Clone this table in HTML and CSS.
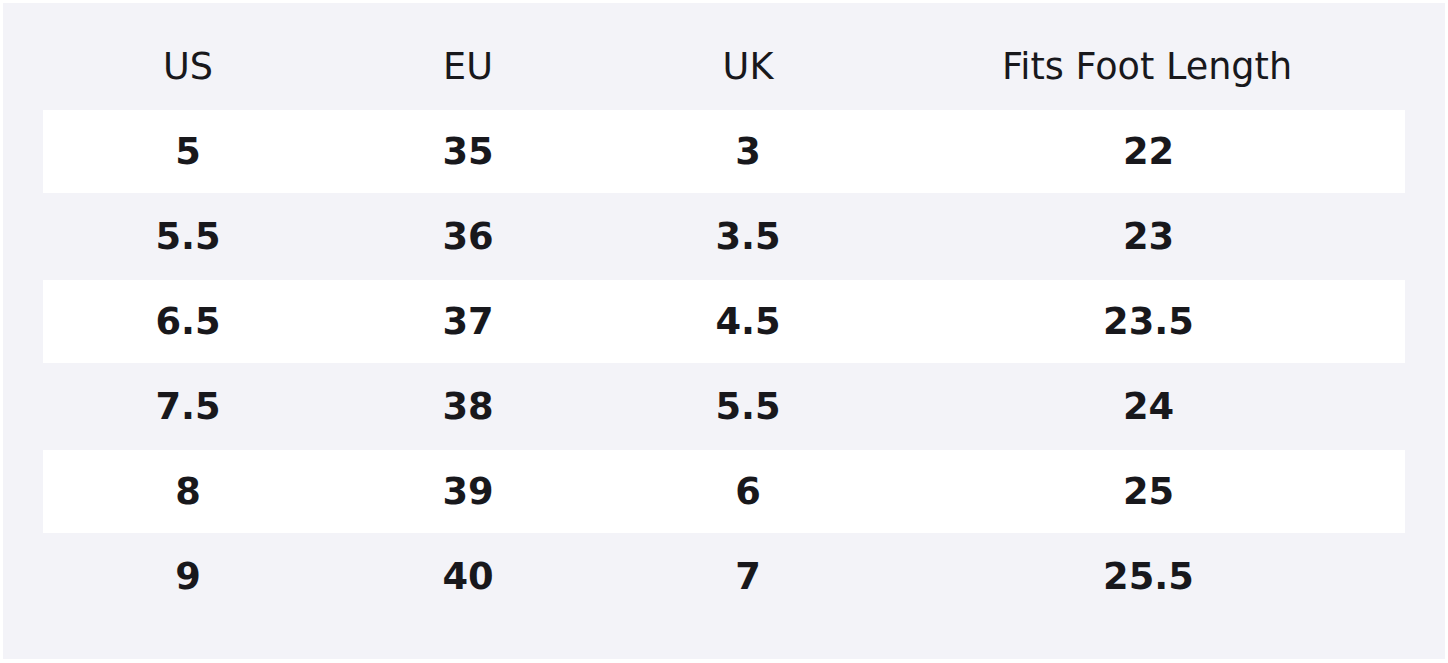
FILE: index.html
```html
<!DOCTYPE html>
<html lang="en">
<head>
<meta charset="utf-8">
<title>Size chart</title>
<link rel="stylesheet" href="styles.css">
</head>
<body>
<div class="panel">
  <div class="chart">
    <div class="row head">
      <div class="cell">US</div><div class="cell">EU</div><div class="cell">UK</div><div class="cell">Fits Foot Length</div>
    </div>
    <div class="row light">
      <div class="cell">5</div><div class="cell">35</div><div class="cell">3</div><div class="cell">22</div>
    </div>
    <div class="row">
      <div class="cell">5.5</div><div class="cell">36</div><div class="cell">3.5</div><div class="cell">23</div>
    </div>
    <div class="row light">
      <div class="cell">6.5</div><div class="cell">37</div><div class="cell">4.5</div><div class="cell">23.5</div>
    </div>
    <div class="row">
      <div class="cell">7.5</div><div class="cell">38</div><div class="cell">5.5</div><div class="cell">24</div>
    </div>
    <div class="row light">
      <div class="cell">8</div><div class="cell">39</div><div class="cell">6</div><div class="cell">25</div>
    </div>
    <div class="row">
      <div class="cell">9</div><div class="cell">40</div><div class="cell">7</div><div class="cell">25.5</div>
    </div>
  </div>
</div>
</body>
</html>
```

FILE: styles.css
```css
html, body {
  margin: 0;
  background: #ffffff;
}
body {
  padding: 3px;
  font-family: "DejaVu Sans", sans-serif;
  color: #18181c;
}
.panel {
  width: 1442px;
  height: 656px;
  box-sizing: border-box;
  background: #f3f3f8;
  padding: 20px 40px 39px;
}
.chart {
  display: flex;
  flex-direction: column;
}
.row {
  display: grid;
  grid-template-columns: 290px 270px 290px 1fr;
  height: 87px;
  align-items: center;
  font-size: 36.8px;
  font-weight: 700;
}
.row.light {
  background: #ffffff;
  height: 83px;
}
.row.head {
  font-weight: 400;
  font-size: 36.6px;
}
.cell {
  text-align: center;
  line-height: 1;
  padding-top: 2px;
}
.cell:last-child {
  padding-right: 1px;
}
.row.head .cell:last-child {
  padding-right: 4px;
}
```
